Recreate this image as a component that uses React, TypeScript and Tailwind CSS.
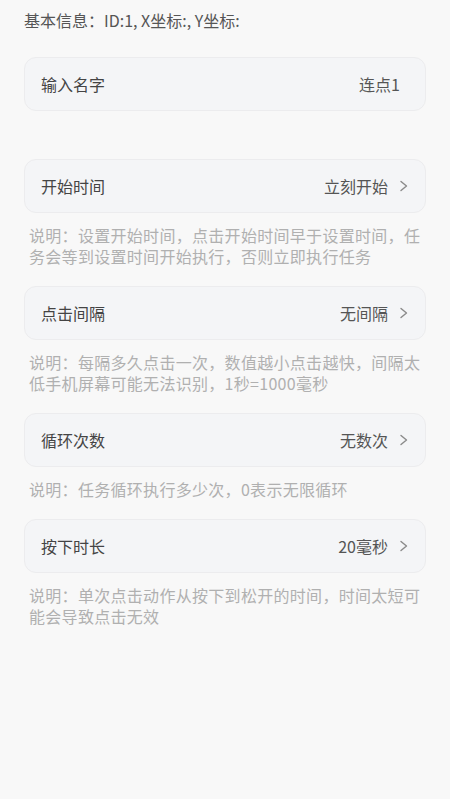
import React from "react";

const font = { fontFamily: '"Noto Sans CJK SC", "Noto Sans", sans-serif' };

const Chevron: React.FC = () => (
  <svg width="9" height="14" viewBox="0 0 9 14" fill="none" className="ml-[11px]">
    <path d="M2 2.5 L7.5 7 L2 11.5" stroke="#8a8a8a" strokeWidth="1.4" strokeLinecap="round" strokeLinejoin="round" />
  </svg>
);

type Row = { label: string; value: string; desc: string };

const rows: Row[] = [
  {
    label: "开始时间",
    value: "立刻开始",
    desc: "说明：设置开始时间，点击开始时间早于设置时间，任务会等到设置时间开始执行，否则立即执行任务",
  },
  {
    label: "点击间隔",
    value: "无间隔",
    desc: "说明：每隔多久点击一次，数值越小点击越快，间隔太低手机屏幕可能无法识别，1秒=1000毫秒",
  },
  {
    label: "循环次数",
    value: "无数次",
    desc: "说明：任务循环执行多少次，0表示无限循环",
  },
  {
    label: "按下时长",
    value: "20毫秒",
    desc: "说明：单次点击动作从按下到松开的时间，时间太短可能会导致点击无效",
  },
];

const App: React.FC = () => {
  return (
    <div className="min-h-screen w-full bg-[#f8f8f8] px-6" style={font}>
      <div className="pt-[8px] text-[16px] leading-[24px] text-[#555555]">
        基本信息：ID:1, X坐标:, Y坐标:
      </div>

      <div className="mt-[25px] flex h-[54px] items-center justify-between rounded-[12px] border border-[#ececee] bg-[#f4f5f7] pl-4 pr-[25px]">
        <span className="text-[16px] text-[#444444]">输入名字</span>
        <span className="text-[16px] text-[#555555]">连点1</span>
      </div>

      <div className="mt-[48px]">
        {rows.map((row, i) => (
          <div key={i} className={i === 0 ? "" : "mt-[19px]"}>
            <div className="flex h-[54px] items-center justify-between rounded-[12px] border border-[#ececee] bg-[#f4f5f7] pl-4 pr-[17px]">
              <span className="text-[16px] text-[#444444]">{row.label}</span>
              <div className="flex items-center">
                <span className="text-[16px] text-[#555555]">{row.value}</span>
                <Chevron />
              </div>
            </div>
            <p className="-mr-[2px] mt-[12px] pl-[5px] text-[16px] leading-[21px] tracking-[0.3px] text-[#b0b0b0]">
              {row.desc}
            </p>
          </div>
        ))}
      </div>
    </div>
  );
};

export default App;
